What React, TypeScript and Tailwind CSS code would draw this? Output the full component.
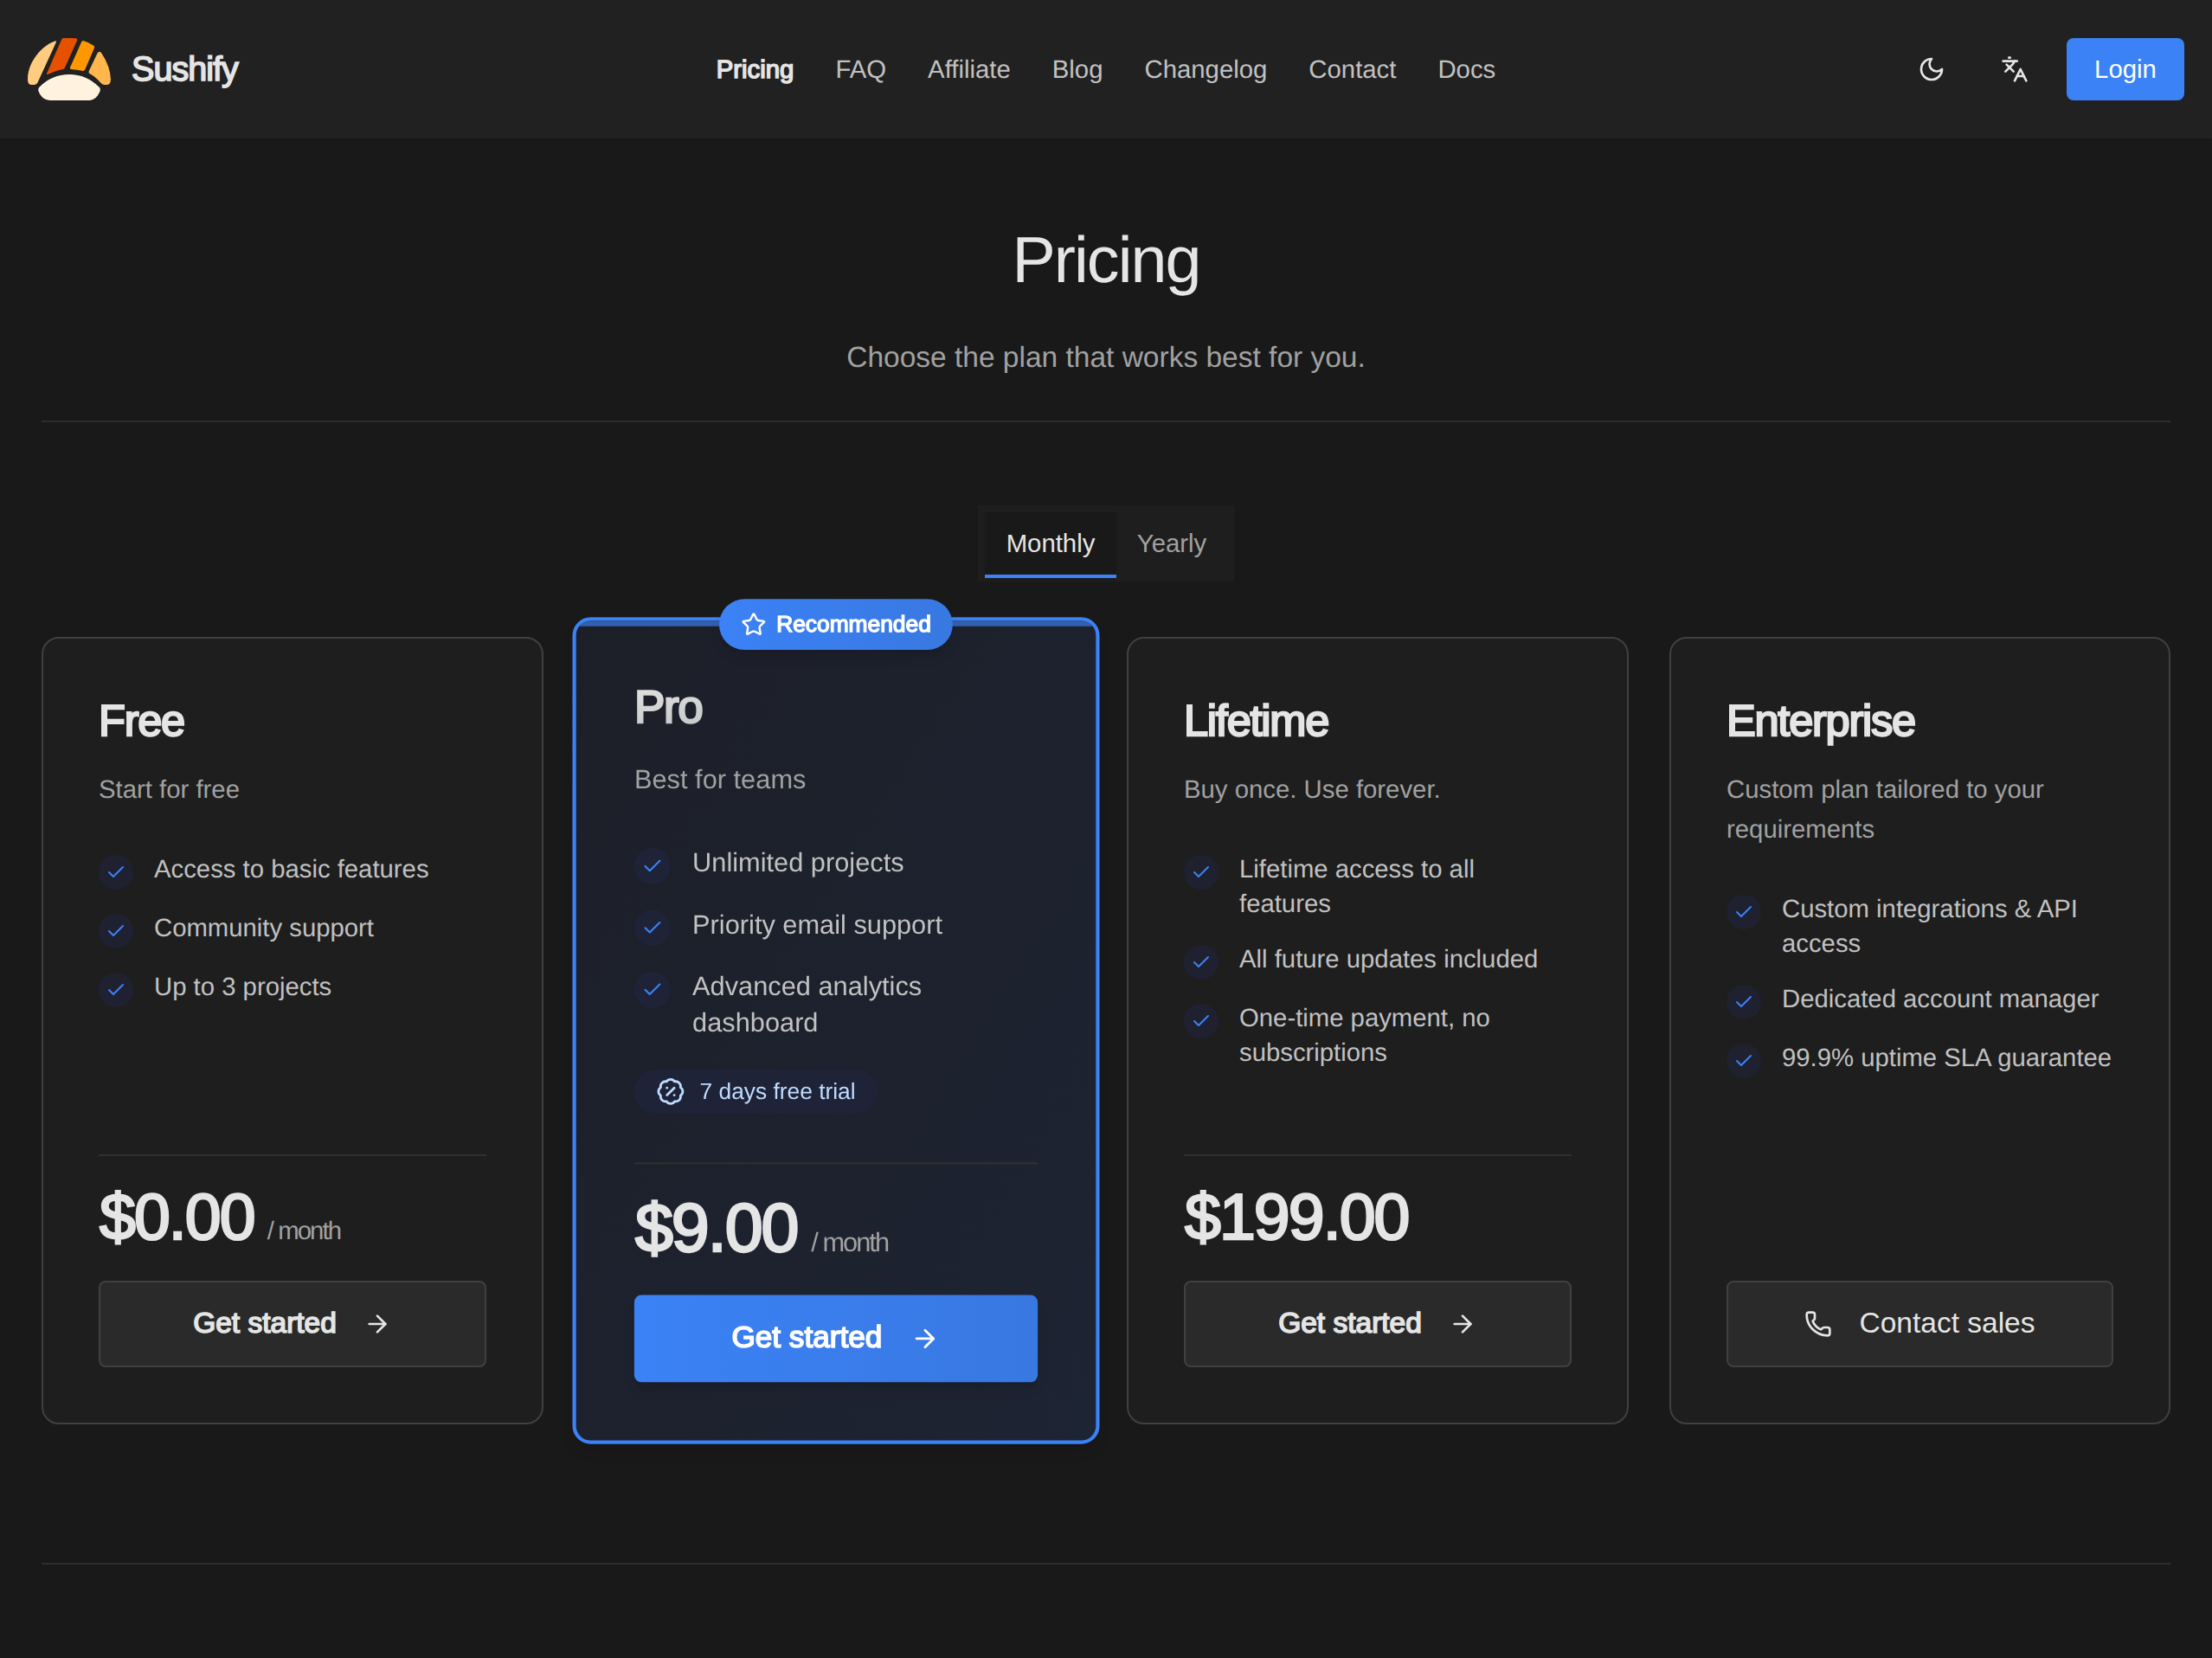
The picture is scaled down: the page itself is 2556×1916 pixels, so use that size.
import React from 'react';
import { ArrowRight, BadgePercent, Check, Languages, Phone, Star } from 'lucide-react';

type Plan = {
    name: string;
    description: string;
    features: string[];
    price?: string;
    period?: string;
    trial?: string;
    recommended?: boolean;
};

const navItems = ['Pricing', 'FAQ', 'Affiliate', 'Blog', 'Changelog', 'Contact', 'Docs'];

const plans: Plan[] = [
    {
        name: 'Free',
        description: 'Start for free',
        features: ['Access to basic features', 'Community support', 'Up to 3 projects'],
        price: '$0.00',
        period: '/ month',
    },
    {
        name: 'Pro',
        description: 'Best for teams',
        features: ['Unlimited projects', 'Priority email support', 'Advanced analytics dashboard'],
        price: '$9.00',
        period: '/ month',
        trial: '7 days free trial',
        recommended: true,
    },
    {
        name: 'Lifetime',
        description: 'Buy once. Use forever.',
        features: ['Lifetime access to all features', 'All future updates included', 'One-time payment, no subscriptions'],
        price: '$199.00',
    },
    {
        name: 'Enterprise',
        description: 'Custom plan tailored to your requirements',
        features: ['Custom integrations & API access', 'Dedicated account manager', '99.9% uptime SLA guarantee'],
    },
];

const Logo: React.FC = () => (
    <svg className="h-[72px] w-24" viewBox="96 132 288 216">
        <path fill="#ffcc80" d="M193 142C150 155 97 210 96 275Q96 294 110 294H118Q127 294 131 285L194 148Q196 141 193 142Z" />
        <path fill="#e65100" d="M220 132Q242 131 264 133Q269 134 267 141L224 236Q222 240 216 241Q190 245 165 258Q161 259 162 255L212 140Q214 133 220 132Z" />
        <path fill="#ff9800" d="M288 141Q310 147 325 158Q329 161 327 166L295 241Q292 246 287 246Q268 241 246 240Q241 238 243 234L282 146Q284 141 288 141Z" />
        <path fill="#ffb74d" d="M345 179Q350 180 353 186Q382 230 384 275Q383 294 370 294H362Q356 294 350 288Q330 265 311 256Q306 253 308 247L338 184Q340 179 345 179Z" />
        <path fill="#fff3e0" d="M240 258Q300 258 345 303Q349 307 347 316Q335 345 312 348H172Q143 345 133 315Q131 307 136 302Q180 258 240 258Z" />
    </svg>
);

const MoonIcon: React.FC = () => (
    <svg className="h-8 w-8" viewBox="0 0 24 24" fill="none" stroke="currentColor" strokeWidth="2" strokeLinecap="round" strokeLinejoin="round">
        <path d="M12 3a6 6 0 0 0 9 9 9 9 0 1 1-9-9Z" />
    </svg>
);

const Header: React.FC = () => (
    <header className="grid h-40 grid-cols-[1fr_auto_1fr] items-center bg-[#212121] px-8 shadow-sm">
        <a className="flex items-center gap-6">
            <Logo />
            <span className="pt-px text-[39.6px] leading-none tracking-tight [-webkit-text-stroke:1.6px]">Sushify</span>
        </a>
        <nav className="flex items-center gap-12 pt-0.5 text-[29.33px] leading-none">
            {navItems.map((item) => (
                <a key={item} className={item === 'Pricing' ? '[-webkit-text-stroke:1.5px]' : 'text-[#c1c1c1]'}>
                    {item}
                </a>
            ))}
        </nav>
        <div className="flex items-center justify-end gap-6">
            <button className="flex size-[72px] items-center justify-center">
                <MoonIcon />
            </button>
            <button className="flex size-[72px] items-center justify-center">
                <Languages className="h-8 w-8" />
            </button>
            <button className="h-[72px] w-[136px] rounded-lg bg-[#3b82f6] text-[29.33px] text-white">Login</button>
        </div>
    </header>
);

const PlanCard: React.FC<{ plan: Plan }> = ({ plan }) => {
    const pro = plan.recommended;
    return (
        <div
            className={`relative flex h-[910px] flex-col rounded-[20px] p-16 ${
                pro
                    ? 'w-[580px] scale-105 border-4 border-[#3b82f6] bg-linear-to-br from-[#1d1f28] to-[#1d2433] bg-origin-border shadow-lg'
                    : 'w-full max-w-[580px] border-2 border-[#404040] bg-[#1e1e1e]'
            }`}
        >
            {pro && (
                <>
                    <div className="absolute inset-0 overflow-hidden rounded-2xl">
                        <div className="h-1.5 bg-[#3360ae]" />
                    </div>
                    <div className="absolute -top-6 left-1/2 flex h-14 -translate-x-1/2 items-center gap-[11px] rounded-full bg-linear-to-r from-[#3b82f6] to-[#3878e1] px-6 whitespace-nowrap text-white shadow-lg">
                        <Star className="size-7" />
                        <span className="pt-px text-[25.1px] leading-none [-webkit-text-stroke:1.3px]">Recommended</span>
                    </div>
                </>
            )}

            <h3
                className={`relative -mt-px text-[50.6px] leading-[64px] tracking-tight [-webkit-text-stroke:2.3px] ${
                    pro ? 'bg-linear-to-br from-[#e5e5e5] to-[#e5e5e5]/70 bg-clip-text text-transparent [-webkit-text-stroke-color:transparent]' : ''
                }`}
            >
                {plan.name}
            </h3>
            <p className="mt-[25px] text-[29.33px] leading-[46px] text-[#a1a1a1]">{plan.description}</p>

            <ul className="mt-12 flex flex-col gap-6">
                {plan.features.map((feature) => (
                    <li key={feature} className="flex items-start gap-6">
                        <span className={`mt-1 flex size-10 shrink-0 items-center justify-center rounded-full ${pro ? 'bg-[#1e2338]' : 'bg-[#1f2131]'}`}>
                            <Check className="size-6 text-[#3b82f6]" />
                        </span>
                        <span className="translate-y-px text-[29.3px] leading-10 text-[#c1c1c1]">{feature}</span>
                    </li>
                ))}
            </ul>

            {plan.trial && (
                <div className="mt-8 flex h-12 items-center gap-4 self-start rounded-full bg-[#1e2338] px-6 text-[#bfdbfe]">
                    <BadgePercent className="size-8" />
                    <span className="pt-px text-[25.1px] leading-none">{plan.trial}</span>
                </div>
            )}

            <div className="mt-auto">
                {plan.price && (
                    <div className="mb-9 flex items-baseline border-t-2 border-[#303030] pt-8 text-[75.2px] leading-[76px] tracking-[-1.9px]">
                        <span className="pl-px [-webkit-text-stroke:2.6px]">{plan.price}</span>
                        {plan.period && <span className="ml-[15px] text-[29.33px] leading-none text-[#a1a1a1]">{plan.period}</span>}
                    </div>
                )}
                {plan.price ? (
                    <button
                        className={`flex w-full items-center justify-center gap-[31px] rounded-lg pr-px text-[33.5px] ${
                            pro
                                ? 'h-24 bg-linear-to-r from-[#3b82f6] to-[#3878e1] text-white shadow-lg'
                                : 'h-[100px] border-2 border-[#404040] bg-[#2a2a2a]'
                        }`}
                    >
                        <span className="pb-0.5 [-webkit-text-stroke:1.6px]">Get started</span>
                        <ArrowRight className="size-8" />
                    </button>
                ) : (
                    <button className="flex h-[100px] w-full items-center justify-center gap-8 rounded-lg border-2 border-[#404040] bg-[#2a2a2a] pr-px text-[33.5px]">
                        <Phone className="size-8" />
                        <span className="pb-0.5">Contact sales</span>
                    </button>
                )}
            </div>
        </div>
    );
};

const App: React.FC = () => {
    return (
        <div className="h-[1916px] w-[2556px] overflow-hidden bg-[#191919] font-['Liberation_Sans',Arial,sans-serif] text-[#e5e5e5] antialiased [text-rendering:geometricPrecision]">
            <Header />

            <main className="px-12">
                <section className="flex h-[328px] flex-col items-center border-b-2 border-[#2d2d2d] pt-[92px]">
                    <h1 className="text-[75.4px] leading-[96px] tracking-tight">Pricing</h1>
                    <p className="mt-[38px] text-[33.5px] leading-[56px] text-[#a1a1a1]">Choose the plan that works best for you.</p>
                </section>

                <div className="mx-auto mt-24 flex h-[88px] w-[296px] bg-[#1e1e1e] p-2 text-[29.33px]">
                    <button className="h-[76px] w-[152px] border-b-4 border-[#3b82f6] bg-[#191919] shadow-sm">Monthly</button>
                    <button className="h-[72px] w-32 text-[#a1a1a1]">Yearly</button>
                </div>

                <div className="mt-16 grid grid-cols-[628px_626px_627px_579px]">
                    {plans.map((plan) => (
                        <PlanCard key={plan.name} plan={plan} />
                    ))}
                </div>

                <div className="mt-40 border-t-2 border-[#2d2d2d]" />
            </main>
        </div>
    );
};

export default App;
